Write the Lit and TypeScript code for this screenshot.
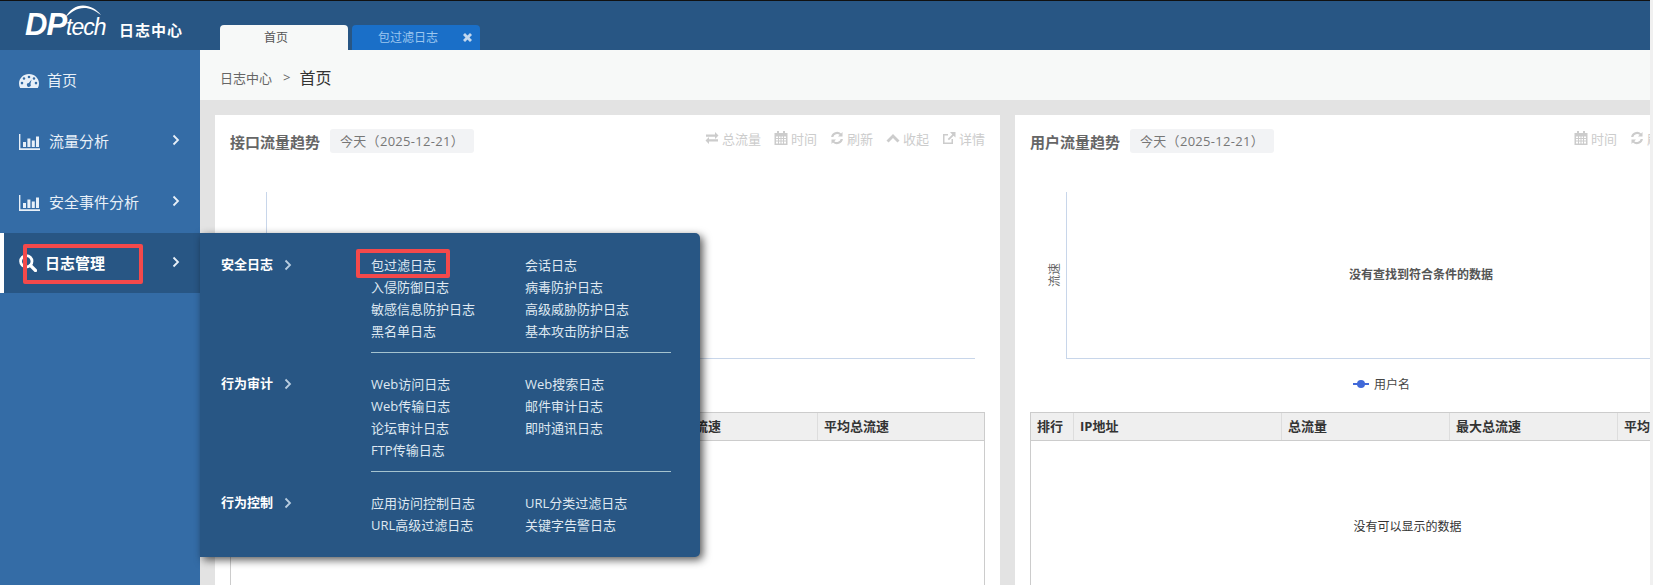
import { LitElement, css, html, nothing, svg } from 'lit';
import { customElement } from 'lit/decorators.js';

const chevron = html`<svg class="chev" viewBox="0 0 8 12" width="8" height="12"><path d="M1.5 1.5 6 6l-4.5 4.5" fill="none" stroke="currentColor" stroke-width="1.8"/></svg>`;

const barsIcon = html`<svg class="nav-icon" viewBox="0 0 21 16" width="21" height="16"><path d="M0 0h1.4v14.2H21V16H0z" fill="currentColor"/><path d="M4 8h3v5H4zM8.400 4.500h3V13h-3zM12.800 6.500h3V13h-3zM17 2.500h3V13h-3z" fill="currentColor"/></svg>`;

const icons = {
  gauge: html`<svg class="nav-icon" viewBox="0 0 20 14" width="20" height="14"><path fill-rule="evenodd" fill="currentColor" d="M10 0c5.500 0 10 4.200 10 9.500 0 1.700-.4 3.200-1.200 4.500H1.200C.4 12.700 0 11.200 0 9.500 0 4.200 4.500 0 10 0zM5 3.200a1.300 1.300 0 1 0 0 2.600 1.300 1.300 0 0 0 0-2.600zM10 1.700a1.300 1.300 0 1 0 0 2.600 1.300 1.300 0 0 0 0-2.600zM15 3.200a1.300 1.300 0 1 0 0 2.600 1.300 1.300 0 0 0 0-2.600zM3 7.800a1.300 1.300 0 1 0 0 2.600 1.300 1.300 0 0 0 0-2.600zM17 7.800a1.300 1.300 0 1 0 0 2.600 1.300 1.300 0 0 0 0-2.600zM12.600 5.400 9.800 9a1.900 1.900 0 1 0 1.600.9z"/></svg>`,
  search: html`<svg class="nav-icon" viewBox="0 0 18 18" width="18" height="18"><circle cx="7.300" cy="7.300" r="5.700" fill="none" stroke="currentColor" stroke-width="2.800"/><path d="m11.500 11.500 5 5" stroke="currentColor" stroke-width="3.200" stroke-linecap="round"/></svg>`,
  exchange: svg`<path d="M1 4.500h9V2l3.500 3.500L10 9V6.700H1zM13 9.300H4V7L.5 10.500 4 14v-2.500h9z" transform="translate(0 -1)"/>`,
  calendar: svg`<path fill-rule="evenodd" d="M3 0h2v2h4V0h2v2h2.500v12H.5V2H3zM2 5.500V7h2V5.500zm3 0V7h1.500V5.500zm2.500 0V7H9V5.500zm2.500 0V7h2V5.500zM2 8v1.500h2V8zm3 0v1.500h1.500V8zm2.500 0v1.500H9V8zM10 8v1.500h2V8zM2 10.500V12.500h2v-2zm3 0v2h1.500v-2zm2.500 0v2H9v-2zm2.500 0v2h2v-2z"/>`,
  refresh: svg`<path d="M12.500 1v4.500H8l1.700-1.700A4 4 0 0 0 3.300 6H1.100a6 6 0 0 1 10-3.500zM1.500 13V8.500H6L4.300 10.200A4 4 0 0 0 10.700 8h2.200a6 6 0 0 1-10 3.500z"/>`,
  up: svg`<path d="M7 3 13.500 9.500 11.500 11.500 7 7 2.500 11.500.5 9.500z"/>`,
  link: svg`<path d="M8 1h5.500v5.500L11.600 4.700 7 9.300 5.700 8l4.600-4.600zM1 3h5v1.500H2.500v7h7V8H11v5H1z"/>`,
};

const menu = [
  {
    label: '安全日志',
    items: ['包过滤日志', '会话日志', '入侵防御日志', '病毒防护日志', '敏感信息防护日志', '高级威胁防护日志', '黑名单日志', '基本攻击防护日志'],
  },
  {
    label: '行为审计',
    items: ['Web访问日志', 'Web搜索日志', 'Web传输日志', '邮件审计日志', '论坛审计日志', '即时通讯日志', 'FTP传输日志'],
  },
  {
    label: '行为控制',
    items: ['应用访问控制日志', 'URL分类过滤日志', 'URL高级过滤日志', '关键字告警日志'],
  },
];

const allActions = [
  { icon: icons.exchange, text: '总流量' },
  { icon: icons.calendar, text: '时间' },
  { icon: icons.refresh, text: '刷新' },
  { icon: icons.up, text: '收起' },
  { icon: icons.link, text: '详情' },
];

@customElement('app-root')
export class AppRoot extends LitElement {
  static styles = css`
    :host {
      display: block;
      width: 1653px;
      height: 585px;
      overflow: hidden;
      position: relative;
      background: #f0f0f0;
      font-family: 'Open Sans', 'Noto Sans CJK SC', sans-serif;
      font-size: 13px;
    }
    .top {
      display: flex;
      align-items: flex-end;
      width: 1650px;
      height: 49px;
      border-top: 1px solid #111;
      background: #285684;
    }
    .brand {
      display: flex;
      align-items: center;
      width: 220px;
      height: 49px;
      flex: none;
      color: #fff;
    }
    .logo {
      position: relative;
      margin: 5px 0 0 25px;
      width: 94px;
      font-family: 'Liberation Sans', sans-serif;
      font-style: italic;
      line-height: 30px;
      letter-spacing: -1px;
      white-space: nowrap;
    }
    .logo b {
      font-size: 31px;
    }
    .logo span {
      font-size: 23px;
      margin-left: 0;
    }
    .logo svg {
      position: absolute;
      left: 40px;
      top: -5px;
    }
    .brand-name {
      margin-top: 8px;
      font-size: 15px;
      font-weight: 700;
      letter-spacing: 1px;
    }
    .tabs {
      display: flex;
      gap: 4px;
    }
    .tab {
      position: relative;
      width: 128px;
      height: 25px;
      padding-right: 16px;
      box-sizing: border-box;
      line-height: 25px;
      text-align: center;
      font-size: 12px;
      border-radius: 4px 4px 0 0;
      background: #f7f9f8;
      color: #555;
    }
    .tab.other {
      background: #1a6fc8;
      color: #9cc7f0;
    }
    .tab-close {
      position: absolute;
      right: 8px;
      top: 8px;
      fill: #c3d8ee;
    }
    .body {
      display: flex;
      height: 535px;
    }
    .side {
      width: 200px;
      flex: none;
      background: #346ca6;
      color: #e8f0f8;
      position: relative;
      z-index: 2;
    }
    .nav {
      display: flex;
      align-items: center;
      height: 61px;
      padding-left: 19px;
      padding-right: 20px;
      box-sizing: border-box;
      font-size: 15px;
      position: relative;
    }
    .nav-icon {
      flex: none;
    }
    .nav .label {
      margin: -2px 0 0 9px;
    }
    .nav .nav-chev {
      display: flex;
      margin-left: auto;
      margin-top: -3px;
      color: #e8f0f8;
    }
    .nav.home .label {
      margin-left: 8px;
    }
    .nav.active {
      height: 60px;
      background: #285684;
      border-left: 4px solid #fff;
      padding-left: 15px;
      color: #fff;
      font-weight: 700;
    }
    .nav.active .label {
      margin-left: 8px;
    }
    .pop {
      position: absolute;
      left: 100%;
      top: 0;
      width: 500px;
      height: 324px;
      box-sizing: border-box;
      padding: 21px 0 0 21px;
      background: #285684;
      border-radius: 0 5px 5px 0;
      box-shadow: 3px 3px 8px rgba(0, 0, 0, 0.65);
      font-size: 13px;
      font-weight: 400;
      color: #dfe8f1;
    }
    .group {
      display: grid;
      grid-template-columns: 150px 300px;
      margin-bottom: 20px;
    }
    .group-name {
      display: flex;
      align-items: flex-start;
      gap: 11px;
      font-weight: 700;
      line-height: 20px;
      color: #fff;
    }
    .group-name .chev {
      margin-top: 5px;
      color: #b8cde0;
    }
    .links {
      display: grid;
      grid-template-columns: 154px 146px;
      grid-auto-rows: 22px;
      line-height: 22px;
      padding-bottom: 10px;
      border-bottom: 1px solid #a5c3cf;
      white-space: nowrap;
    }
    .group:last-child .links {
      border-bottom: none;
    }
    .main {
      flex: 1;
      min-width: 0;
    }
    .crumbs {
      display: flex;
      align-items: center;
      width: 1450px;
      height: 50px;
      padding-left: 20px;
      padding-top: 4px;
      box-sizing: border-box;
      background: #f7f9f8;
      color: #666;
    }
    .crumbs .sep {
      margin: 0 9px 0 11px;
    }
    .crumbs strong {
      font-size: 16px;
      font-weight: 400;
      color: #333;
    }
    .cards {
      display: flex;
      gap: 15px;
      width: 1450px;
      height: 485px;
      padding: 15px 0 0 15px;
      box-sizing: border-box;
      overflow: hidden;
      background: #e3e3e3;
    }
    .card {
      width: 785px;
      flex: none;
      padding: 14px 15px 0;
      box-sizing: border-box;
      background: #fff;
    }
    .card-head {
      display: flex;
      align-items: center;
      height: 24px;
    }
    .card-title {
      width: 100px;
      font-size: 15px;
      font-weight: 700;
      color: #666;
      white-space: nowrap;
    }
    .pill {
      width: 144px;
      height: 24px;
      line-height: 24px;
      padding-left: 10px;
      box-sizing: border-box;
      border-radius: 3px;
      background: #f2f3f5;
      color: #777;
      letter-spacing: 0.3px;
      white-space: nowrap;
    }
    .actions {
      display: flex;
      gap: 13px;
      margin-left: auto;
      margin-top: -6px;
      color: #ccc;
    }
    .action {
      display: flex;
      align-items: center;
      gap: 3px;
    }
    .action svg {
      fill: #ccc;
    }
    .plot {
      position: relative;
      display: flex;
      align-items: center;
      justify-content: center;
      height: 167px;
      margin: 39px 10px 0 36px;
      padding-bottom: 2px;
      box-sizing: border-box;
      border-left: 1px solid #c8d6ea;
      border-bottom: 1px solid #c8d6ea;
      font-size: 12px;
      font-weight: 700;
      color: #555;
    }
    .y-name {
      position: absolute;
      left: -25px;
      top: 74px;
      transform: rotate(-90deg);
      font-weight: 400;
      color: #666;
    }
    .legend {
      display: flex;
      align-items: center;
      justify-content: center;
      gap: 5px;
      height: 20px;
      margin: 15px 0 18px;
      padding-right: 52px;
      font-size: 12px;
      color: #444;
    }
    .tbl {
      border: 1px solid #ccc;
      border-bottom: none;
    }
    .thead {
      display: grid;
      grid-template-columns: 43px 208px 168px 168px 1fr;
      height: 27px;
      background: #efefef;
      border-bottom: 1px solid #ccc;
      line-height: 26px;
      font-weight: 700;
      color: #333;
    }
    .thead div {
      padding-left: 6px;
      border-right: 1px solid #ddd;
      white-space: nowrap;
    }
    .thead div:last-child {
      border-right: none;
    }
    .tbody {
      display: flex;
      align-items: center;
      justify-content: center;
      height: 170px;
      font-size: 12px;
      color: #333;
    }
    .mark {
      position: absolute;
      z-index: 3;
      box-sizing: border-box;
      border: 4px solid #f4494b;
      border-radius: 2px;
    }
    .mark.nav-mark {
      left: 23px;
      top: 244px;
      width: 120px;
      height: 40px;
    }
    .mark.link-mark {
      left: 356px;
      top: 249px;
      width: 94px;
      height: 29px;
    }
  `;

  // The left card sits under the menu, so its chart texts are never seen.
  renderCard(title: string, actions: typeof allActions, filled: boolean) {
    return html`
      <section class="card">
        <div class="card-head">
          <div class="card-title">${title}</div>
          <div class="pill">今天（2025-12-21）</div>
          <div class="actions">
            ${actions.map(
              (a) => html`<span class="action"><svg viewBox="0 0 14 14" width="14" height="14">${a.icon}</svg>${a.text}</span>`
            )}
          </div>
        </div>
        <div class="plot">
          ${filled ? html`<span class="y-name">流速</span>没有查找到符合条件的数据` : nothing}
        </div>
        <div class="legend">
          ${filled
            ? html`<svg width="16" height="8" viewBox="0 0 16 8"><path d="M0 3h16v2H0z" fill="#4169d8"/><circle cx="8" cy="4" r="4" fill="#4169d8"/></svg>用户名`
            : nothing}
        </div>
        <div class="tbl">
          <div class="thead">
            <div>排行</div>
            <div>${filled ? 'IP地址' : ''}</div>
            <div>总流量</div>
            <div>最大总流速</div>
            <div>平均总流速</div>
          </div>
          <div class="tbody">${filled ? '没有可以显示的数据' : nothing}</div>
        </div>
      </section>
    `;
  }

  render() {
    const navChev = html`<span class="nav-chev">${chevron}</span>`;
    return html`
      <header class="top">
        <div class="brand">
          <div class="logo">
            <svg width="37" height="13" viewBox="0 0 37 13"><path d="M0 13C4 5 11 .5 18 .5c7 0 13 3.500 18 9.500C30 5.500 25 3 19 3 12 3 6 7 0 13z" fill="#fff"/></svg>
            <b>DP</b><span>tech</span>
          </div>
          <div class="brand-name">日志中心</div>
        </div>
        <nav class="tabs">
          <div class="tab">首页</div>
          <div class="tab other">
            包过滤日志
            <svg class="tab-close" width="9" height="9" viewBox="0 0 9 9"><path d="M2 0 4.500 2.500 7 0 9 2 6.500 4.500 9 7 7 9 4.500 6.500 2 9 0 7 2.500 4.500 0 2z"/></svg>
          </div>
        </nav>
      </header>
      <div class="body">
        <aside class="side">
          <div class="nav home">${icons.gauge}<span class="label">首页</span></div>
          <div class="nav">${barsIcon}<span class="label">流量分析</span>${navChev}</div>
          <div class="nav">${barsIcon}<span class="label">安全事件分析</span>${navChev}</div>
          <div class="nav active">
            ${icons.search}<span class="label">日志管理</span>${navChev}
            <div class="pop">
              ${menu.map(
                (g) => html`
                  <div class="group">
                    <div class="group-name">${g.label}${chevron}</div>
                    <div class="links">${g.items.map((i) => html`<span>${i}</span>`)}</div>
                  </div>
                `
              )}
            </div>
          </div>
        </aside>
        <main class="main">
          <div class="crumbs">日志中心<span class="sep">&gt;</span><strong>首页</strong></div>
          <div class="cards">
            ${this.renderCard('接口流量趋势', allActions, false)}
            ${this.renderCard('用户流量趋势', allActions.slice(1), true)}
          </div>
        </main>
      </div>
      <div class="mark nav-mark"></div>
      <div class="mark link-mark"></div>
    `;
  }
}
